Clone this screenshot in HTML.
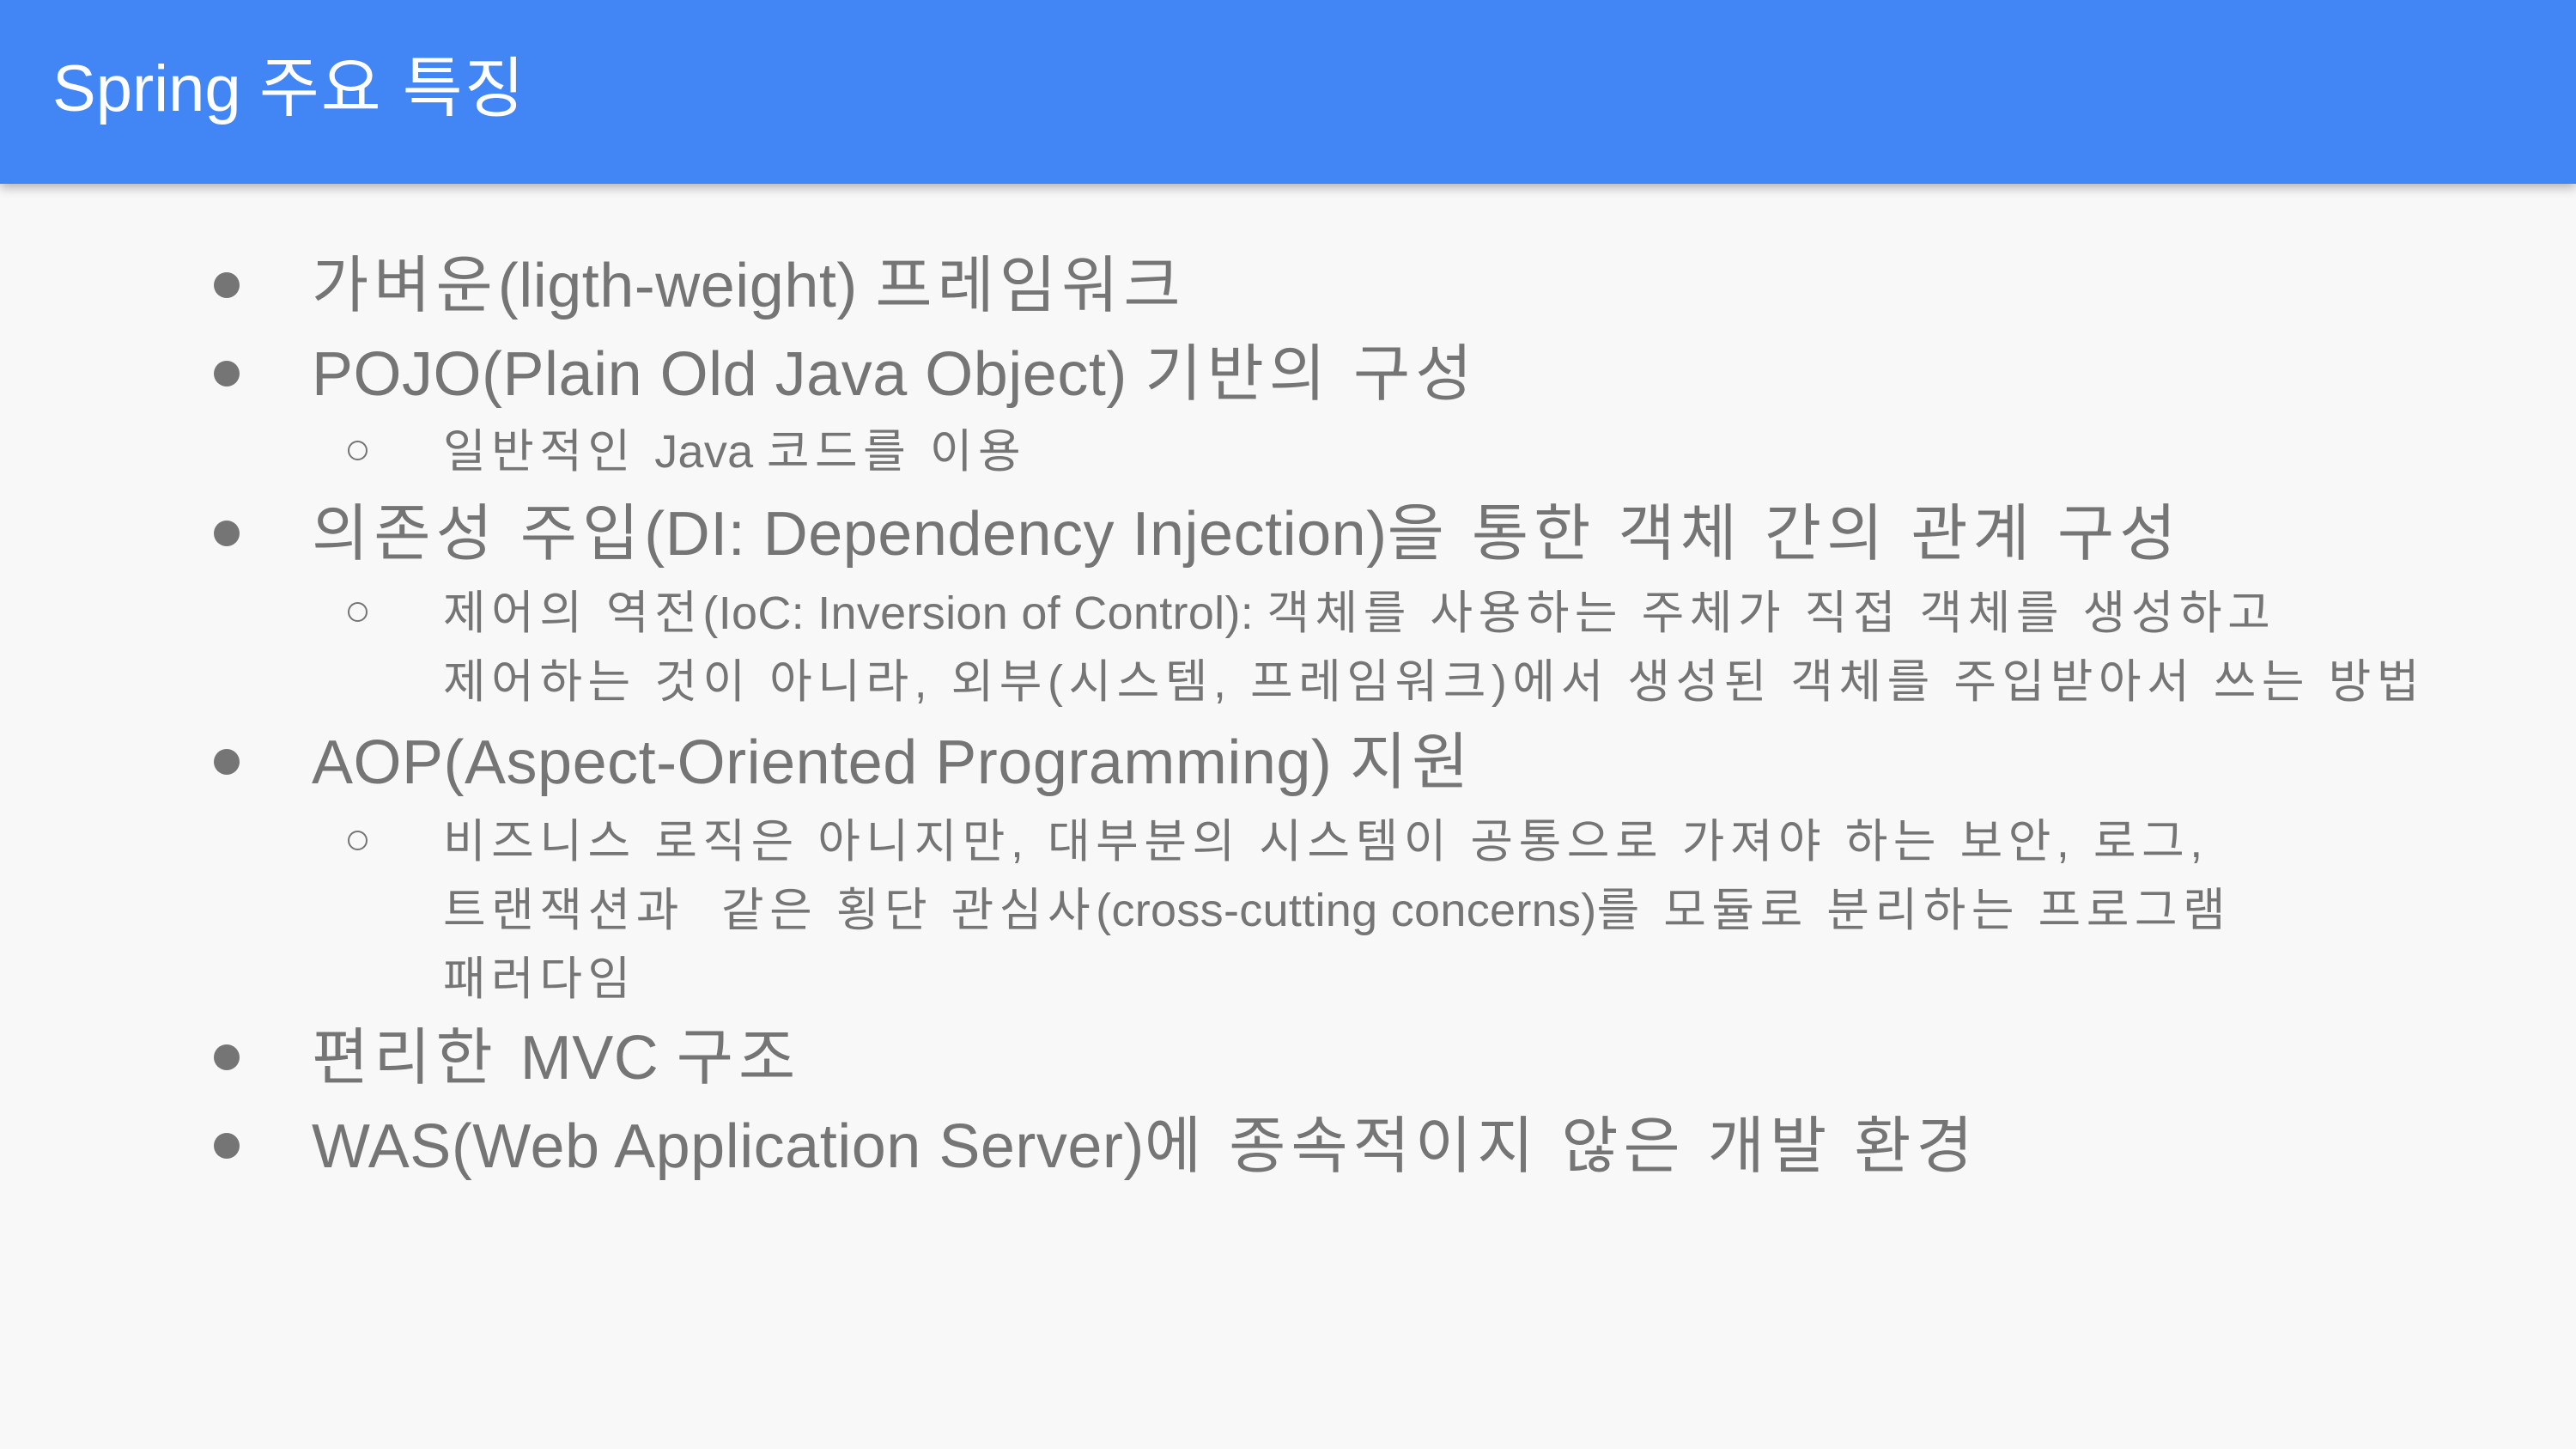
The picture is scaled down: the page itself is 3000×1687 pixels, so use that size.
<!DOCTYPE html>
<html><head><meta charset="utf-8"><style>
html,body{margin:0;padding:0}
body{width:3000px;height:1687px;background:#f8f8f8;position:relative;overflow:hidden;font-family:"Liberation Sans","Noto Sans CJK KR",sans-serif;color:#757575}
.hd{position:absolute;left:0;top:0;width:3000px;height:214px;background:#4285f4;box-shadow:0 4px 12px rgba(0,0,0,.3)}
.t{position:absolute;left:61px;top:66px;font-size:76px;line-height:76px;color:#fff;white-space:nowrap;letter-spacing:0}
.t span{letter-spacing:2px}
.m,.s{position:absolute;white-space:nowrap}
.m{left:363px;font-size:72px;line-height:72px;letter-spacing:6px}
.s{left:516px;font-size:54px;line-height:54px;letter-spacing:6.5px}
.l{letter-spacing:0.5px}
.s .l{letter-spacing:0.3px}
.b{position:absolute;left:249px;width:30px;height:30px;border-radius:50%;background:#757575}
.c{position:absolute;left:405px;width:19px;height:19px;border-radius:50%;border:2px solid #757575}
</style></head><body>
<div class="hd"><div class="t">Spring <span>주요 특징</span></div></div>

<div class="b" style="top:317px"></div><div class="m" style="top:297px">가벼운<span class="l">(ligth-weight) </span>프레임워크</div>
<div class="b" style="top:420px"></div><div class="m" style="top:400px"><span class="l">POJO(Plain Old Java Object) </span>기반의 구성</div>
<div class="c" style="top:513px"></div><div class="s" style="top:499px">일반적인 <span class="l">Java </span>코드를 이용</div>
<div class="b" style="top:606px"></div><div class="m" style="top:586px">의존성 주입<span class="l">(DI: Dependency Injection)</span>을 통한 객체 간의 관계 구성</div>
<div class="c" style="top:701px"></div><div class="s" style="top:687px">제어의 역전<span class="l">(IoC: Inversion of Control): </span>객체를 사용하는 주체가 직접 객체를 생성하고</div>
<div class="s" style="top:767px">제어하는 것이 아니라, 외부(시스템, 프레임워크)에서 생성된 객체를 주입받아서 쓰는 방법</div>
<div class="b" style="top:872px"></div><div class="m" style="top:852px"><span class="l">AOP(Aspect-Oriented Programming) </span>지원</div>
<div class="c" style="top:967px"></div><div class="s" style="top:953px">비즈니스 로직은 아니지만, 대부분의 시스템이 공통으로 가져야 하는 보안, 로그,</div>
<div class="s" style="top:1033px">트랜잭션과&nbsp; 같은 횡단 관심사<span class="l">(cross-cutting concerns)</span>를 모듈로 분리하는 프로그램</div>
<div class="s" style="top:1113px">패러다임</div>
<div class="b" style="top:1216px"></div><div class="m" style="top:1196px">편리한 <span class="l">MVC </span>구조</div>
<div class="b" style="top:1319px"></div><div class="m" style="top:1299px"><span class="l">WAS(Web Application Server)</span>에 종속적이지 않은 개발 환경</div>
</body></html>
